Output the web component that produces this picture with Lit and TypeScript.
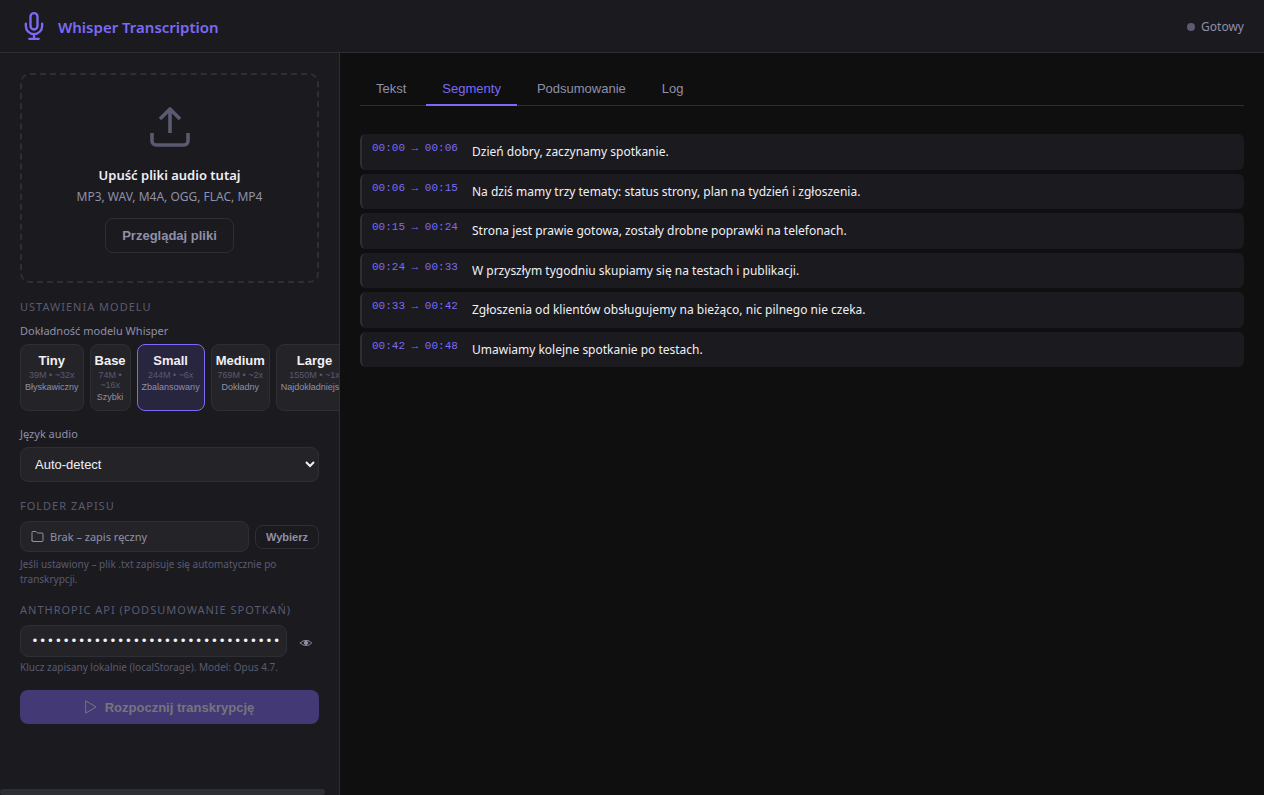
import { LitElement, html, css } from "lit";
import { customElement, state } from "lit/decorators.js";
import { classMap } from "lit/directives/class-map.js";

interface Segment {
  from: string;
  to: string;
  text: string;
}

interface Model {
  name: string;
  spec: string;
  desc: string;
}

const MODELS: Model[] = [
  { name: "Tiny", spec: "39M • ~32x", desc: "Błyskawiczny" },
  { name: "Base", spec: "74M • ~16x", desc: "Szybki" },
  { name: "Small", spec: "244M • ~6x", desc: "Zbalansowany" },
  { name: "Medium", spec: "769M • ~2x", desc: "Dokładny" },
  { name: "Large", spec: "1550M • ~1x", desc: "Najdokładniejszy" },
];

const TABS = ["Tekst", "Segmenty", "Podsumowanie", "Log"];

const SEGMENTS: Segment[] = [
  { from: "00:00", to: "00:06", text: "Dzień dobry, zaczynamy spotkanie." },
  { from: "00:06", to: "00:15", text: "Na dziś mamy trzy tematy: status strony, plan na tydzień i zgłoszenia." },
  { from: "00:15", to: "00:24", text: "Strona jest prawie gotowa, zostały drobne poprawki na telefonach." },
  { from: "00:24", to: "00:33", text: "W przyszłym tygodniu skupiamy się na testach i publikacji." },
  { from: "00:33", to: "00:42", text: "Zgłoszenia od klientów obsługujemy na bieżąco, nic pilnego nie czeka." },
  { from: "00:42", to: "00:48", text: "Umawiamy kolejne spotkanie po testach." },
];

@customElement("app-root")
export class AppRoot extends LitElement {
  @state() private model = "Small";
  @state() private tab = "Segmenty";
  @state() private keyVisible = false;

  static styles = css`
    :host {
      --bg: #0f0f0f;
      --surface: #1a1a1f;
      --raised: #242428;
      --border: #2e2e35;
      --accent: #7c6af7;
      --text: #f0f0f5;
      --muted: #9090a8;
      --dim: #5a5a70;
      display: flex;
      flex-direction: column;
      height: 100vh;
      background: var(--bg);
      color: var(--text);
      font-family: "Noto Sans", "Open Sans", sans-serif;
      font-size: 13px;
    }
    * { box-sizing: border-box; }
    button, select, input { font-family: "Liberation Sans", Arial, sans-serif; margin: 0; }
    button { cursor: pointer; }
    svg { display: block; fill: none; stroke: currentColor; stroke-linecap: round; stroke-linejoin: round; }

    .header {
      display: flex;
      align-items: center;
      gap: 10px;
      padding: 12px 20px;
      background: var(--surface);
      border-bottom: 1px solid var(--border);
    }
    .logo { width: 28px; height: 28px; color: var(--accent); }
    .title { margin: 0; padding-top: 2px; font-size: 15px; line-height: 20px; font-weight: 600; color: var(--accent); }
    .status { display: flex; align-items: center; gap: 6px; margin-left: auto; padding-top: 2px; font-size: 12px; line-height: 16px; color: var(--muted); }
    .dot { width: 8px; height: 8px; border-radius: 50%; background: var(--dim); }

    .body { display: flex; flex: 1; min-height: 0; }
    .sidebar {
      display: flex;
      flex: 0 0 340px;
      flex-direction: column;
      min-width: 0;
      background: var(--surface);
      border-right: 1px solid var(--border);
    }
    .panel { flex: 1; min-height: 0; padding: 20px; overflow: auto; scrollbar-width: none; }
    .scroll-thumb { width: 96%; height: 6px; border-radius: 3px; background: var(--border); }

    .drop {
      display: flex;
      flex-direction: column;
      align-items: center;
      padding: 28px 20px;
      border: 2px dashed var(--border);
      border-radius: 10px;
      text-align: center;
    }
    .upload { width: 48px; height: 48px; color: var(--dim); stroke-linecap: butt; }
    .drop-title { margin: 14px 0 4px; font-size: 13px; line-height: 20px; font-weight: 600; }
    .formats { margin: 0 0 13px; font-size: 12px; line-height: 16px; color: var(--muted); }
    .ghost {
      padding: 9px 16px;
      border: 1px solid var(--border);
      border-radius: 8px;
      background: transparent;
      color: var(--muted);
      font-size: 13px;
      line-height: 15px;
      font-weight: 600;
    }
    .ghost.small { padding: 4px 10px; font-size: 11px; line-height: 14px; }

    .section { margin-top: 16px; }
    .section.compact { margin-top: 15px; }
    .heading { margin: 0 0 8px; font-size: 11px; line-height: 15px; font-weight: 400; letter-spacing: 1px; text-transform: uppercase; color: var(--dim); }
    .label { display: block; margin: 0 0 5px; padding: 0; font-size: 11px; line-height: 17px; color: var(--muted); }
    .models { min-width: 0; margin: 0 0 14px; padding: 0; border: 0; }
    .grid { display: grid; grid-template-columns: repeat(5, 1fr); gap: 6px; }
    .model {
      display: flex;
      flex-direction: column;
      align-items: center;
      gap: 2px;
      padding: 8px 4px;
      border: 1px solid var(--border);
      border-radius: 8px;
      background: var(--raised);
      color: var(--text);
      text-align: center;
    }
    .model.active { border-color: var(--accent); background: #28253f; }
    .name { font-size: 13px; line-height: 15px; font-weight: 700; }
    .spec { font-size: 9px; line-height: 10px; color: var(--dim); }
    .desc { font-size: 9px; line-height: 10px; color: var(--muted); }

    .select {
      width: 100%;
      height: 35px;
      padding: 0 10px;
      border: 1px solid var(--border);
      border-radius: 8px;
      background: var(--raised);
      color: var(--text);
      font-size: 13px;
    }
    .row { display: flex; align-items: center; gap: 6px; }
    .folder {
      display: flex;
      flex: 1;
      align-items: center;
      gap: 6px;
      padding: 7px 10px;
      border: 1px solid var(--border);
      border-radius: 8px;
      background: var(--raised);
      color: var(--muted);
      font-size: 11px;
      line-height: 15px;
    }
    .folder svg { width: 13px; height: 13px; }
    .hint { margin: 5px 0 0; font-size: 10px; line-height: 15px; color: var(--dim); }
    .compact .hint { margin-top: 3px; }
    .key {
      flex: 1;
      min-width: 0;
      height: 32px;
      padding: 0 6px 0 10px;
      border: 1px solid var(--border);
      border-radius: 8px;
      background: var(--raised);
      color: var(--text);
      font-family: "Liberation Mono", monospace;
      font-size: 13px;
    }
    .eye { display: flex; padding: 8px 6px 4px; border: 0; background: none; color: var(--muted); }
    .eye svg { width: 14px; height: 14px; }
    .start {
      display: flex;
      align-items: center;
      justify-content: center;
      gap: 8px;
      width: 100%;
      height: 34px;
      margin-top: 15px;
      border: 0;
      border-radius: 8px;
      background: #433a75;
      color: #76757c;
      font-size: 13px;
      font-weight: 700;
    }
    .start svg { width: 12px; height: 14px; stroke-linejoin: miter; }

    .main { display: flex; flex: 1; flex-direction: column; gap: 28px; min-width: 0; padding: 20px; overflow-y: auto; }
    .tabs { display: flex; gap: 4px; border-bottom: 1px solid var(--border); }
    .tab {
      margin-bottom: -1px;
      padding: 8px 16px;
      border: 0;
      border-bottom: 2px solid transparent;
      background: none;
      color: var(--muted);
      font-size: 13px;
      line-height: 15px;
      font-weight: 500;
    }
    .tab.active { color: var(--accent); border-bottom-color: var(--accent); }
    .segments { display: flex; flex-direction: column; gap: 4px; margin: 0; padding: 0; list-style: none; }
    .segment {
      display: flex;
      gap: 10px;
      padding: 8px 10px;
      border-left: 2px solid var(--border);
      border-radius: 6px;
      background: var(--surface);
      font-size: 13px;
      line-height: 1.5;
    }
    .time { flex: 0 0 90px; font-family: "Liberation Mono", monospace; font-size: 11px; line-height: 12px; color: var(--accent); white-space: nowrap; }
    .text { margin: 0; }
    .text span { font-size: 12px; }
  `;

  render() {
    return html`
      <header class="header">
        <svg class="logo" viewBox="0 0 24 24" stroke-width="2" aria-hidden="true">
          <path d="M12 1a3 3 0 0 0-3 3v8a3 3 0 0 0 6 0V4a3 3 0 0 0-3-3z" />
          <path d="M19 10v2a7 7 0 0 1-14 0v-2M12 19v4M8 23h8" />
        </svg>
        <h1 class="title">Whisper Transcription</h1>
        <div class="status"><span class="dot"></span><span>Gotowy</span></div>
      </header>
      <div class="body">
        <aside class="sidebar">
          <div class="panel">
            <section class="drop">
              <svg class="upload" viewBox="0 0 24 24" stroke-width="1.800" aria-hidden="true">
                <path d="M21 15v4a2 2 0 0 1-2 2H5a2 2 0 0 1-2-2v-4" />
                <path d="M17 8l-5-5-5 5M12 3v12" />
              </svg>
              <p class="drop-title">Upuść pliki audio tutaj</p>
              <p class="formats">MP3, WAV, M4A, OGG, FLAC, MP4</p>
              <button class="ghost" type="button">Przeglądaj pliki</button>
            </section>

            <section class="section">
              <h2 class="heading">Ustawienia modelu</h2>
              <fieldset class="models">
                <legend class="label">Dokładność modelu Whisper</legend>
                <div class="grid">
                  ${MODELS.map(
                    (m) => html`
                      <button
                        type="button"
                        class=${classMap({ model: true, active: m.name === this.model })}
                        aria-pressed=${m.name === this.model}
                        @click=${() => (this.model = m.name)}
                      >
                        <span class="name">${m.name}</span>
                        <span class="spec">${m.spec}</span>
                        <span class="desc">${m.desc}</span>
                      </button>
                    `
                  )}
                </div>
              </fieldset>
              <label class="label" for="lang">Język audio</label>
              <select class="select" id="lang">
                <option>Auto-detect</option>
                <option>Polski</option>
                <option>English</option>
              </select>
            </section>

            <section class="section">
              <h2 class="heading">Folder zapisu</h2>
              <div class="row">
                <div class="folder">
                  <svg viewBox="0 0 13 13" aria-hidden="true">
                    <path d="M1 10.5v-8a1 1 0 0 1 1-1h3l1.500 1.500H11a1 1 0 0 1 1 1v6.500a1 1 0 0 1-1 1H2a1 1 0 0 1-1-1z" />
                  </svg>
                  <span>Brak – zapis ręczny</span>
                </div>
                <button class="ghost small" type="button">Wybierz</button>
              </div>
              <p class="hint">Jeśli ustawiony – plik .txt zapisuje się automatycznie po transkrypcji.</p>
            </section>

            <section class="section compact">
              <h2 class="heading">Anthropic API (podsumowanie spotkań)</h2>
              <div class="row">
                <input
                  class="key"
                  type=${this.keyVisible ? "text" : "password"}
                  aria-label="Klucz Anthropic API"
                  autocomplete="off"
                  .value=${"0".repeat(32)}
                />
                <button class="eye" type="button" aria-label="Pokaż klucz" @click=${() => (this.keyVisible = !this.keyVisible)}>
                  <svg viewBox="0 0 14 14" aria-hidden="true">
                    <path d="M1.500 7C3.500 3.500 10.500 3.500 12.500 7C10.500 10.300 3.500 10.300 1.500 7z" />
                    <circle cx="7" cy="6.800" r="1.700" fill="currentColor" />
                  </svg>
                </button>
              </div>
              <p class="hint">Klucz zapisany lokalnie (localStorage). Model: Opus 4.7.</p>
            </section>

            <button class="start" type="button" disabled>
              <svg viewBox="0 0 12 14" aria-hidden="true"><path d="M1 1L11 7L1 13z" /></svg>
              <span>Rozpocznij transkrypcję</span>
            </button>
          </div>
          <div class="scroll-thumb"></div>
        </aside>

        <main class="main">
          <div class="tabs" role="tablist">
            ${TABS.map(
              (t) => html`
                <button
                  type="button"
                  role="tab"
                  class=${classMap({ tab: true, active: t === this.tab })}
                  aria-selected=${t === this.tab}
                  @click=${() => (this.tab = t)}
                >${t}</button>
              `
            )}
          </div>
          <ol class="segments">
            ${SEGMENTS.map(
              (s) => html`
                <li class="segment">
                  <span class="time">${s.from} → ${s.to}</span>
                  <p class="text"><span>${s.text}</span></p>
                </li>
              `
            )}
          </ol>
        </main>
      </div>
    `;
  }
}
